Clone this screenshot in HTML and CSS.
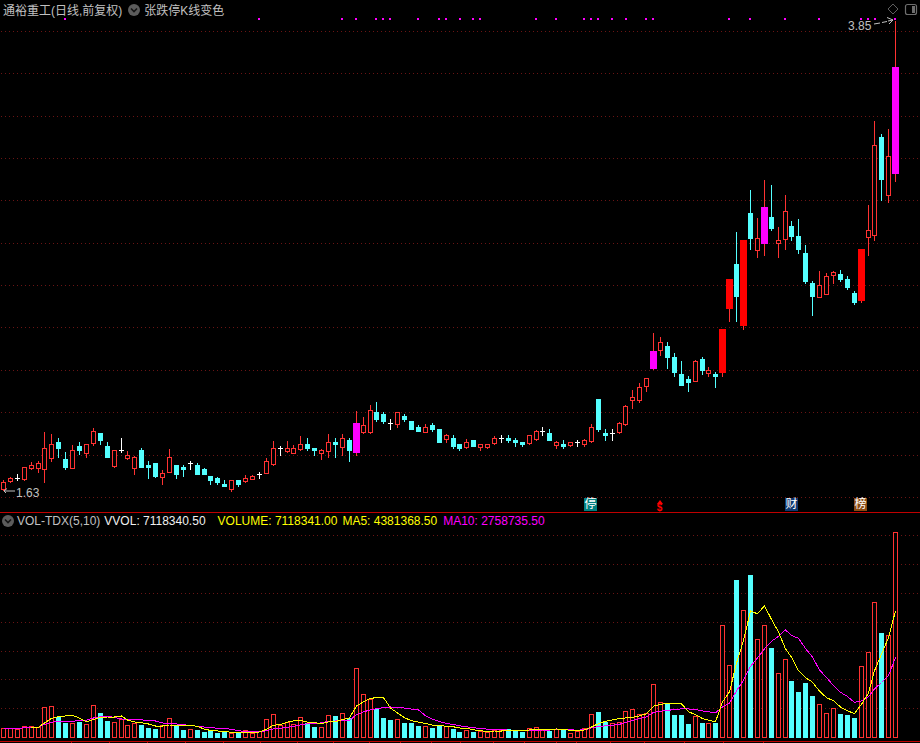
FILE: index.html
```html
<!DOCTYPE html>
<html lang="zh-CN">
<head>
  <meta charset="UTF-8">
  <title>通裕重工 K线</title>
  <link rel="stylesheet" href="styles.css">
</head>
<body>
  <div class="chart-page">
    <div class="panel price-panel">
      <svg class="plot" id="pricePlot" width="920" height="514" shape-rendering="crispEdges"></svg>
      <div class="legend">
        <span class="title">通裕重工(日线,前复权)</span>
        <svg class="toggle" width="12" height="12" viewBox="0 0 12 12">
          <circle cx="6" cy="6" r="6" fill="#5c5c5c"/>
          <path d="M3 4.5 L6 7.5 L9 4.5" fill="none" stroke="#141414" stroke-width="1.6"/>
        </svg>
        <span class="title title-study">张跌停K线变色</span>
      </div>
      <svg class="tools" width="30" height="14" viewBox="0 0 30 14">
        <path d="M5 1 L10 6 L5 11 L0 6 Z" fill="none" stroke="#5e5e5e"/>
        <rect x="17.5" y="1.5" width="11" height="10" rx="2" fill="none" stroke="#6e6e6e" stroke-width="1.2"/>
        <rect x="24" y="3" width="3" height="7" fill="#6e6e6e"/>
      </svg>
      <span class="price-label low-label">1.63</span>
      <span class="price-label high-label">3.85</span>
      <span class="badge badge-halt">停</span>
      <span class="badge badge-money">$</span>
      <span class="badge badge-finance">财</span>
      <span class="badge badge-rank">榜</span>
    </div>
    <div class="panel volume-panel">
      <svg class="plot" id="volumePlot" width="920" height="231" shape-rendering="crispEdges"></svg>
      <div class="legend volume-legend">
        <svg class="toggle" width="12" height="12" viewBox="0 0 12 12">
          <circle cx="6" cy="6" r="6" fill="#5c5c5c"/>
          <path d="M3 4.5 L6 7.5 L9 4.5" fill="none" stroke="#141414" stroke-width="1.6"/>
        </svg>
        <span class="title">VOL-TDX(5,10)</span>
        <span class="vvol">VVOL: 7118340.50</span>
        <span class="vol">VOLUME: 7118341.00</span>
        <span class="ma5">MA5: 4381368.50</span>
        <span class="ma10">MA10: 2758735.50</span>
      </div>
    </div>
  </div>
  <script src="chart.js"></script>
</body>
</html>
```

FILE: styles.css
```css
body {
  margin: 0;
  background-color: #000;
}
.chart-page {
  width: 920px;
  height: 743px;
  background-color: #000;
  overflow: hidden;
  font-family: "Liberation Sans", "Noto Sans CJK SC", sans-serif;
  font-size: 12px;
  color: #c0c0c0;
}
.panel {
  position: relative;
}
.price-panel {
  height: 512px;
}
.volume-panel {
  height: 231px;
}
.plot {
  position: absolute;
  top: 0;
  left: 0;
}
.legend {
  position: relative;
  display: flex;
  align-items: center;
  gap: 6px;
  height: 19px;
  padding-left: 3px;
  white-space: nowrap;
}
.title-study {
  margin-left: -2px;
}
.volume-legend {
  height: 17px;
  padding-left: 2px;
  gap: 0;
}
.volume-legend .title {
  margin-left: 3px;
}
.vvol {
  margin-left: 4px;
  color: #f0f0f0;
}
.vol {
  margin-left: 12px;
  color: #ffff00;
}
.ma5 {
  margin-left: 5px;
  color: #ffff00;
}
.ma10 {
  margin-left: 6px;
  color: #ff00ff;
}
.toggle {
  flex: none;
}
.tools {
  position: absolute;
  top: 3px;
  right: 2px;
}
.price-label {
  position: absolute;
  line-height: 14px;
}
.low-label {
  left: 16px;
  top: 486px;
}
.high-label {
  left: 848px;
  top: 19px;
}
.badge {
  position: absolute;
  top: 498px;
  width: 13px;
  height: 13px;
  line-height: 13px;
  text-align: center;
  color: #fff;
}
.badge-halt {
  left: 584px;
  background-color: #007f7f;
}
.badge-money {
  left: 653px;
  display: flex;
  flex-direction: column;
  align-items: center;
  color: #ff0000;
  font-size: 10px;
  font-weight: bold;
  line-height: 8px;
}
.badge-money::before {
  content: "";
  margin-top: 2px;
  border-left: 3px solid transparent;
  border-right: 3px solid transparent;
  border-bottom: 4px solid #ff0000;
}
.badge-finance {
  left: 785px;
  background-color: #0f3870;
}
.badge-rank {
  left: 854px;
  background-color: #8a4a12;
}
```

FILE: chart.js
```js
// [type, high, bodyTop, bodyBottom, low, volumeTop]
// r hollow red, c cyan, w white doji, d white doji on a down day, m limit magenta, f solid red
const candles = [
  ["r",480,482,489,490,728],["r",477,478,481,482,728],["w",474,478,478,480,729],["r",467,467,479,480,726],
  ["r",462,465,468,469,726],["r",461,463,468,472,727],["r",432,448,469,482,707],["r",434,444,458,461,706],
  ["c",438,442,448,457,717],["c",452,459,467,469,723],["r",445,450,468,468,723],["c",442,446,450,454,722],
  ["r",444,444,453,457,724],["r",428,431,443,445,705],["c",433,433,440,444,713],["c",442,446,457,457,721],
  ["r",450,450,466,467,722],["w",438,450,450,452,719],["r",451,455,458,459,725],["r",456,457,468,474,723],
  ["c",448,450,467,467,725],["c",461,465,467,478,728],["c",463,463,476,477,729],["r",470,473,477,484,725],
  ["r",449,457,472,472,718],["c",465,465,474,478,725],["c",465,467,469,476,730],["w",461,463,463,469,729],
  ["c",463,465,474,474,730],["c",468,469,474,474,732],["c",476,476,480,484,731],["c",477,478,482,484,733],
  ["c",480,484,486,486,732],["r",480,480,489,491,733],["c",480,480,484,486,733],["r",475,478,481,482,730],
  ["r",475,476,479,479,733],["w",472,474,474,478,731],["r",458,461,473,473,719],["r",441,448,464,465,714],
  ["w",446,448,448,455,725],["r",441,448,451,452,722],["r",445,448,453,453,724],["r",436,444,449,450,717],
  ["c",438,444,448,450,723],["c",448,448,450,455,727],["r",449,450,453,459,727],["r",434,442,451,457,715],
  ["c",438,442,444,457,716],["r",434,438,447,455,713],["c",438,440,450,461,718],["m",411,423,453,455,668],
  ["r",417,425,432,433,694],["r",405,410,432,433,699],["c",402,412,419,421,709],["c",412,414,421,423,718],
  ["d",419,423,423,429,720],["r",412,412,424,427,719],["c",414,416,419,421,723],["c",421,421,429,429,723],
  ["c",425,427,431,431,726],["r",424,427,432,432,726],["c",423,425,429,431,728],["c",429,429,442,442,725],
  ["r",434,435,439,442,726],["c",435,438,446,448,729],["c",444,444,448,450,732],["r",439,442,447,448,730],
  ["c",440,440,446,446,732],["r",444,444,447,450,731],["r",444,444,447,448,732],["r",436,438,443,444,730],
  ["w",435,438,438,442,730],["c",435,438,440,442,729],["c",438,440,442,446,731],["c",442,442,444,446,732],
  ["r",435,435,443,444,728],["r",430,431,439,440,727],["w",427,431,431,435,730],["c",429,433,440,440,731],
  ["r",441,442,445,448,729],["c",440,444,446,448,729],["r",442,442,445,446,733],["w",440,442,442,446,731],
  ["r",439,440,444,446,728],["r",424,427,441,442,714],["c",399,399,429,431,712],["c",429,433,435,440,722],
  ["w",429,433,433,440,723],["r",422,423,432,433,722],["r",405,406,424,425,711],["r",390,397,400,408,709],
  ["r",383,387,400,402,714],["r",378,378,386,391,713],["m",333,351,369,369,684],["r",337,342,350,355,702],
  ["c",342,346,357,368,703],["c",353,357,372,376,715],["c",361,374,385,385,715],["c",376,379,382,391,724],
  ["r",360,361,381,381,716],["c",357,359,370,374,723],["r",367,370,373,376,723],["c",372,374,376,387,723],
  ["f",329,329,373,376,625],["f",279,279,309,321,665],["c",232,264,296,321,580],["f",240,240,326,329,610],
  ["c",190,213,238,249,575],["r",218,238,250,257,639],["m",180,207,244,255,625],["c",185,217,228,230,648],
  ["r",227,240,243,257,673],["r",195,211,239,249,659],["c",221,226,236,240,681],["c",219,236,249,253,692],
  ["c",245,253,281,283,683],["c",281,283,296,315,696],["r",271,285,297,297,704],["r",273,276,294,294,713],
  ["r",271,272,275,283,708],["c",270,274,279,281,714],["c",276,279,287,289,715],["c",291,293,302,304,718],
  ["f",249,249,301,302,666],["r",205,230,237,255,652],["r",121,145,235,240,602],["c",134,137,179,200,633],
  ["r",129,156,195,202,635],["m",21,67,174,181,532]
];

const RED = "#ff3232", CYAN = "#54ffff", WHITE = "#ffffff", MAGENTA = "#ff00ff", YELLOW = "#ffff00";
const GRID = "#6a1414", AXIS = "#c00000";
const VOLUME_BASE = 738;

const signalDots = [65,259,342,356,376,383,390,418,439,446,460,473,480,536,556,584,591,598,612,626,646,653,729,750,785,819,861,868,875,895];
const priceGrid = [31,73,116,158,200,243,285,327,370,412,455,497];
const volumeGrid = [535,564,593,622,651,679,708];
const volumeTicks = [71,109,147,185,223,260,297,333,369,400,431,460,493,524,556,576,610,644,684,723,763];

// a gap of 6px instead of 7 comes once every 12 candles
function column(i) {
  return 3 + 7 * i - Math.floor((i + 6) / 12);
}

function rect(x, y, w, h, fill, stroke) {
  if (stroke) {
    return `<rect x="${x + 0.5}" y="${y + 0.5}" width="${w - 1}" height="${h - 1}" fill="#000" stroke="${stroke}"/>`;
  }
  return `<rect x="${x}" y="${y}" width="${w}" height="${h}" fill="${fill}"/>`;
}

function gridLine(y) {
  return `<line x1="1" x2="920" y1="${y + 0.5}" y2="${y + 0.5}" stroke="${GRID}" stroke-dasharray="1 3"/>`;
}

function drawCandle(c, i) {
  const [type, high, top, bottom, low] = c;
  const x = column(i);

  let out = rect(x, high, 1, low - high + 1, type === "w" || type === "d" ? WHITE : (type === "c" ? CYAN : RED));
  if (type === "r") {
    out += rect(x - 2, top, 5, bottom - top + 1, null, RED);
  } else if (type === "c") {
    out += rect(x - 2, top, 5, bottom - top + 1, CYAN);
  } else if (type === "w" || type === "d") {
    out += rect(x - 2, top, 5, 1, WHITE);
  } else {
    out += rect(x - 3, top, 7, bottom - top, type === "f" ? "#ff0000" : MAGENTA);
  }
  return out;
}

function drawBar(c, i, offset) {
  const x = column(i);
  const top = c[5] - offset;
  const h = VOLUME_BASE - c[5];
  const down = c[0] === "c" || c[0] === "d";
  return down ? rect(x - 2, top, 5, h, CYAN) : rect(x - 2, top, 5, h, null, RED);
}

function movingAverage(n, start, offset) {
  const points = [];
  candles.forEach((c, i) => {
    if (i < start) return;
    const win = candles.slice(Math.max(0, i - n + 1), i + 1);
    const sum = win.reduce((total, w) => total + (VOLUME_BASE - w[5]), 0);
    points.push(`${column(i) + 0.5},${(VOLUME_BASE - sum / win.length - offset).toFixed(1)}`);
  });
  return points.join(" ");
}

function drawPrice() {
  let out = priceGrid.map(gridLine).join("");
  out += signalDots.map(x => rect(x - 1, 18, 2, 2, MAGENTA)).join("");
  out += candles.map(drawCandle).join("");
  out += rect(0, 512, 920, 1, AXIS);
  // arrows from the low and high labels to their candles
  out += `<g shape-rendering="auto" fill="none" stroke="#c0c0c0">
    <path d="M15 491 H4 M4 491 L7 488.5 M4 491 L6 493"/>
    <path d="M874 24 L880 23 M882 22.5 L887 21.5 M888 21 L893 20 M887 17.5 L893 20 L889 24"/>
  </g>`;
  document.getElementById("pricePlot").innerHTML = out;
}

function drawVolume() {
  const offset = 512;
  let out = volumeGrid.map(y => gridLine(y - offset)).join("");
  out += candles.map((c, i) => drawBar(c, i, offset)).join("");
  out += `<polyline points="${movingAverage(10, 0, offset)}" fill="none" stroke="${MAGENTA}"/>`;
  out += `<polyline points="${movingAverage(5, 4, offset)}" fill="none" stroke="${YELLOW}"/>`;
  out += rect(0, 741 - offset, 920, 1, AXIS);
  out += volumeTicks.map(x => rect(x, 742 - offset, 1, 1, AXIS)).join("");
  document.getElementById("volumePlot").innerHTML = out;
}

drawPrice();
drawVolume();
```
